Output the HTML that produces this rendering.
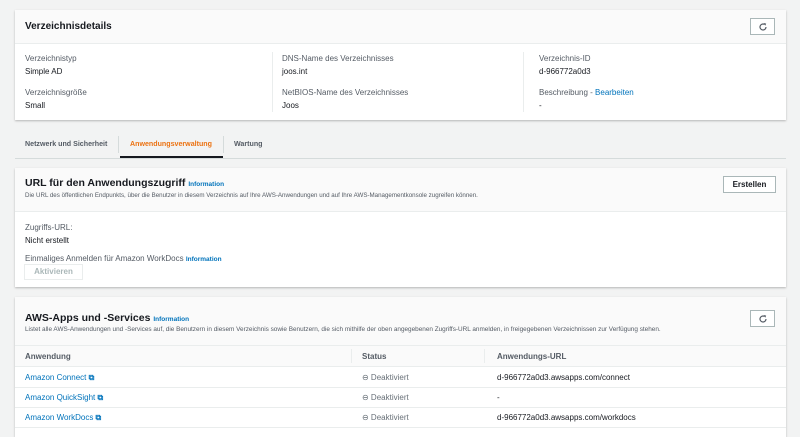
<!DOCTYPE html>
<html><head><meta charset="utf-8"><style>
*{margin:0;padding:0;box-sizing:border-box}
body{width:800px;height:431px;overflow:hidden;background:#f2f3f3;font-family:"Liberation Sans",sans-serif;color:#16191f;position:relative;font-size:8px}
.a{position:absolute;white-space:nowrap}
.panel{position:absolute;left:15px;width:771px;background:#fff;box-shadow:0 1px 2px rgba(0,0,0,.25)}
.hd{background:#fafafa;border-bottom:1px solid #eaeded}
.lbl{color:#545b64;font-size:8px}
.val{font-size:8px;color:#16191f}
.link{color:#0073bb}
.info{color:#0073bb;font-size:6.5px;font-weight:bold}
.btn{position:absolute;border:1px solid #aab7b8;background:#fff;font-weight:bold;font-size:8px;color:#545b64;text-align:center}
.sep{position:absolute;width:1px;background:#eaeded}
.deak{color:#687078}
.tab{font-weight:bold;color:#545b64;font-size:7.1px}
</style></head><body>
<div class="panel" style="top:10px;height:110px">
 <div class="hd" style="height:34px"></div>
 <div class="a" style="left:10px;top:11px;font-size:10px;font-weight:bold">Verzeichnisdetails</div>
 <div class="btn" style="left:735px;top:8px;width:25px;height:17px"><svg width="10" height="10" viewBox="0 0 10 10" style="margin-top:3px"><path d="M8 5A3 3 0 1 1 6.5 2.4" fill="none" stroke="#545b64" stroke-width="1.2"/><path d="M5.8 1L8.2 1.6 7.2 3.8Z" fill="#545b64"/></svg></div>
 <div class="sep" style="left:257px;top:42px;height:60px"></div>
 <div class="sep" style="left:508px;top:42px;height:60px"></div>
 <div class="a lbl" style="left:10px;top:44px">Verzeichnistyp</div>
 <div class="a val" style="left:10px;top:57px">Simple AD</div>
 <div class="a lbl" style="left:10px;top:78px">Verzeichnisgröße</div>
 <div class="a val" style="left:10px;top:91px">Small</div>
 <div class="a lbl" style="left:267px;top:44px">DNS-Name des Verzeichnisses</div>
 <div class="a val" style="left:267px;top:57px">joos.int</div>
 <div class="a lbl" style="left:267px;top:78px">NetBIOS-Name des Verzeichnisses</div>
 <div class="a val" style="left:267px;top:91px">Joos</div>
 <div class="a lbl" style="left:524px;top:44px">Verzeichnis-ID</div>
 <div class="a val" style="left:524px;top:57px">d-966772a0d3</div>
 <div class="a lbl" style="left:524px;top:78px">Beschreibung - <span class="link">Bearbeiten</span></div>
 <div class="a val" style="left:524px;top:91px">-</div>
</div>
<div class="a" style="left:15px;top:158px;width:771px;height:1px;background:#d5dbdb"></div>
<div class="a tab" style="left:25px;top:140px">Netzwerk und Sicherheit</div>
<div class="a" style="left:118px;top:136px;width:1px;height:17px;background:#d5dbdb"></div>
<div class="a tab" style="left:130px;top:140px;color:#ec7211">Anwendungsverwaltung</div>
<div class="a" style="left:120px;top:156px;width:103px;height:2px;background:#16191f"></div>
<div class="a" style="left:223px;top:136px;width:1px;height:17px;background:#d5dbdb"></div>
<div class="a tab" style="left:234px;top:140px">Wartung</div>

<div class="panel" style="top:168px;height:119px">
 <div class="hd" style="height:44px"></div>
 <div class="a" style="left:10px;top:9px;font-size:10.5px;font-weight:bold">URL für den Anwendungszugriff <span class="info">Information</span></div>
 <div class="a" style="left:10px;top:24px;font-size:6.2px;color:#545b64">Die URL des öffentlichen Endpunkts, über die Benutzer in diesem Verzeichnis auf Ihre AWS-Anwendungen und auf Ihre AWS-Managementkonsole zugreifen können.</div>
 <div class="btn" style="left:708px;top:8px;width:53px;height:17px;line-height:15px;color:#16191f">Erstellen</div>
 <div class="a lbl" style="left:10px;top:55px">Zugriffs-URL:</div>
 <div class="a val" style="left:10px;top:68px">Nicht erstellt</div>
 <div class="a lbl" style="left:10px;top:86px">Einmaliges Anmelden für Amazon WorkDocs <span class="info">Information</span></div>
 <div class="btn" style="left:9px;top:96px;width:59px;height:16px;line-height:14px;color:#aab7b8;border-color:#eaeded">Aktivieren</div>
</div>

<div class="panel" style="top:297px;height:140px">
 <div class="hd" style="height:48px;border-bottom:none"></div>
 <div class="a" style="left:10px;top:15px;font-size:10.5px;font-weight:bold">AWS-Apps und -Services <span class="info">Information</span></div>
 <div class="a" style="left:10px;top:29px;font-size:6.4px;color:#545b64">Listet alle AWS-Anwendungen und -Services auf, die Benutzern in diesem Verzeichnis sowie Benutzern, die sich mithilfe der oben angegebenen Zugriffs-URL anmelden, in freigegebenen Verzeichnissen zur Verfügung stehen.</div>
 <div class="btn" style="left:735px;top:13px;width:25px;height:17px"><svg width="10" height="10" viewBox="0 0 10 10" style="margin-top:3px"><path d="M8 5A3 3 0 1 1 6.5 2.4" fill="none" stroke="#545b64" stroke-width="1.2"/><path d="M5.8 1L8.2 1.6 7.2 3.8Z" fill="#545b64"/></svg></div>
 <div class="a" style="left:0;top:48px;width:771px;height:22px;background:#fafafa;border-top:1px solid #eaeded;border-bottom:1px solid #eaeded"></div>
 <div class="sep" style="left:336px;top:52px;height:14px"></div>
 <div class="sep" style="left:469px;top:52px;height:14px"></div>
 <div class="a" style="left:10px;top:55px;font-weight:bold;color:#545b64">Anwendung</div>
 <div class="a" style="left:347px;top:55px;font-weight:bold;color:#545b64">Status</div>
 <div class="a" style="left:482px;top:55px;font-weight:bold;color:#545b64">Anwendungs-URL</div>
 <div class="a" style="left:0;top:90px;width:771px;height:1px;background:#eaeded"></div>
 <div class="a" style="left:0;top:110px;width:771px;height:1px;background:#eaeded"></div>
 <div class="a" style="left:0;top:130px;width:771px;height:1px;background:#eaeded"></div>
 <div class="a link" style="left:10px;top:76px">Amazon Connect <b>⧉</b></div>
 <div class="a link" style="left:10px;top:96px">Amazon QuickSight <b>⧉</b></div>
 <div class="a link" style="left:10px;top:116px">Amazon WorkDocs <b>⧉</b></div>
 <div class="a deak" style="left:347px;top:76px">⊖ Deaktiviert</div>
 <div class="a deak" style="left:347px;top:96px">⊖ Deaktiviert</div>
 <div class="a deak" style="left:347px;top:116px">⊖ Deaktiviert</div>
 <div class="a val" style="left:482px;top:76px">d-966772a0d3.awsapps.com/connect</div>
 <div class="a val" style="left:482px;top:96px">-</div>
 <div class="a val" style="left:482px;top:116px">d-966772a0d3.awsapps.com/workdocs</div>
</div>
</body></html>
